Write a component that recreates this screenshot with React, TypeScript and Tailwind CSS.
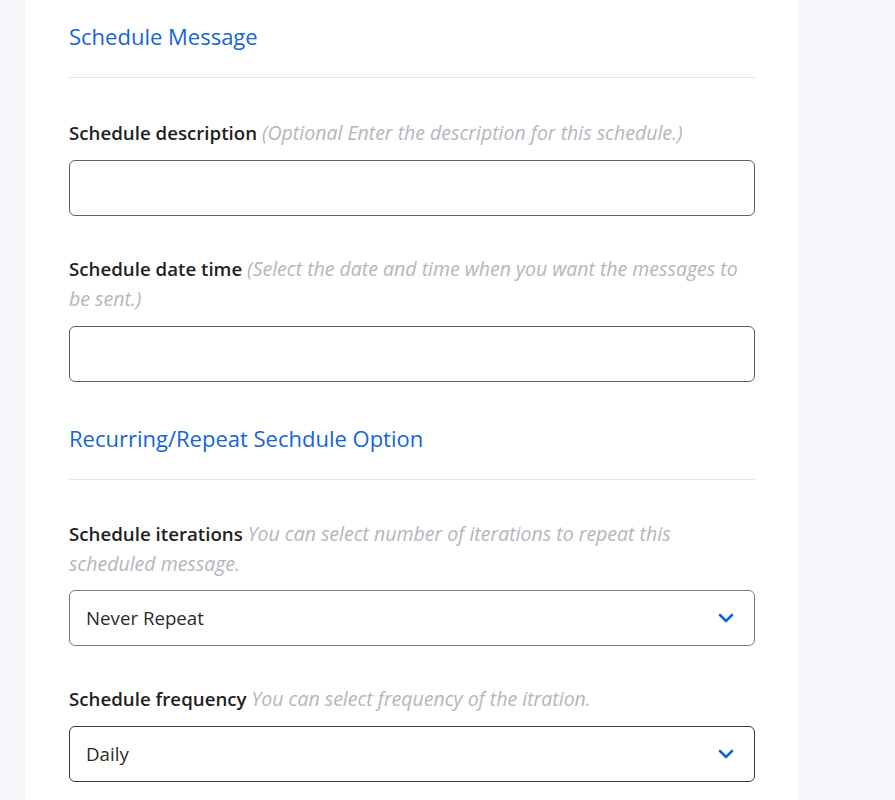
import React from "react";

const font = { fontFamily: '"Open Sans", "Noto Sans", sans-serif' };

function Chevron() {
  return (
    <svg width="16" height="10" viewBox="0 0 16 10" className="shrink-0">
      <path d="M2 2l6 6 6-6" fill="none" stroke="#1565d8" strokeWidth="2.6" strokeLinecap="round" strokeLinejoin="round" />
    </svg>
  );
}

function Label({ title, hint, tight }: { title: string; hint: React.ReactNode; tight?: boolean }) {
  return (
    <div className={`text-[18.7px] leading-[30px] ${tight ? "mb-[11px]" : "mb-[12px]"}`}>
      <span className="font-semibold text-[#1f1f1f]">{title}</span>{" "}
      <span className="italic text-[19.5px] text-[#b3b6bd]">{hint}</span>
    </div>
  );
}

function Input() {
  return <div className="h-[56px] w-full rounded-[6px] border border-[#5f5f5f] bg-white" />;
}

function Select({ value, dark }: { value: string; dark?: boolean }) {
  return (
    <div className={`h-[56px] w-full rounded-[6px] border ${dark ? "border-[#3a3a3a]" : "border-[#7a7a7a]"} bg-white flex items-center justify-between pl-[16px] pr-[20px]`}>
      <span className="text-[18.7px] text-[#2b2b2b]">{value}</span>
      <Chevron />
    </div>
  );
}

function Heading({ children }: { children: React.ReactNode }) {
  return (
    <div>
      <div className="text-[22px] leading-[30px] text-[#1565d8] font-medium">{children}</div>
      <div className="mt-[26px] h-px bg-[#e4e5e8]" />
    </div>
  );
}

export default function App() {
  return (
    <div className="min-h-[800px] w-[895px] bg-[#f5f6f9] overflow-hidden" style={font}>
      <div className="ml-[25px] w-[773px] bg-white min-h-[800px] px-[44px] pt-[21px]">
        <div className="w-[686px]">
          <Heading>Schedule Message</Heading>
          <div className="mt-[40px]">
            <Label title="Schedule description" hint="(Optional Enter the description for this schedule.)" />
            <Input />
          </div>
          <div className="mt-[38px]">
            <Label title="Schedule date time" hint="(Select the date and time when you want the messages to be sent.)" />
            <Input />
          </div>
          <div className="mt-[41px]">
            <Heading>Recurring/Repeat Sechdule Option</Heading>
          </div>
          <div className="mt-[39px]">
            <Label
              tight
              title="Schedule iterations"
              hint={
                <>
                  You can select number of iterations to repeat this
                  <br />
                  scheduled message.
                </>
              }
            />
            <Select value="Never Repeat" />
          </div>
          <div className="mt-[38px]">
            <Label title="Schedule frequency" hint="You can select frequency of the itration." />
            <Select value="Daily" dark />
          </div>
        </div>
      </div>
    </div>
  );
}
